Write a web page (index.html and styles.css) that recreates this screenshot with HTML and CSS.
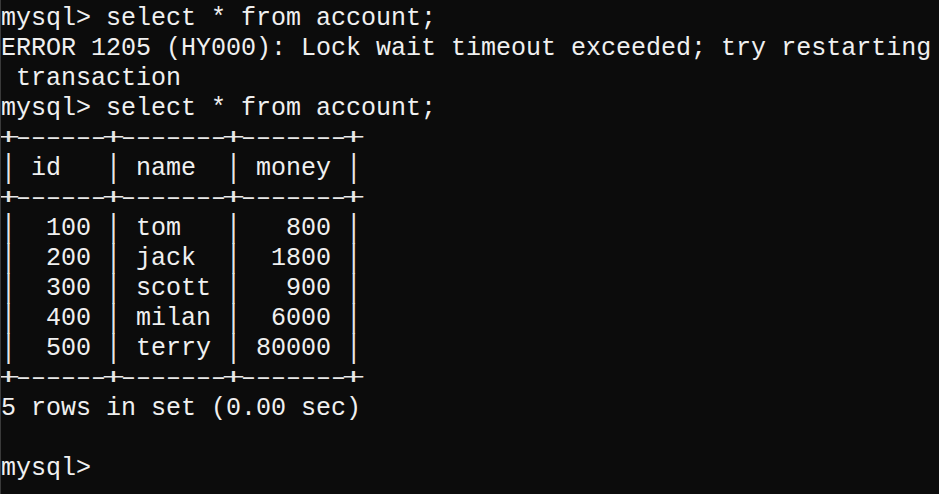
FILE: index.html
```html
<!DOCTYPE html>
<html>
<head>
<meta charset="utf-8">
<link rel="stylesheet" href="styles.css">
</head>
<body>
<pre class="console">mysql&gt; select * from account;
ERROR 1205 (HY000): Lock wait timeout exceeded; try restarting
 transaction
mysql&gt; select * from account;
<span class="rule">+------+-------+-------+</span>
<span class="v">|</span> id   <span class="v">|</span> name  <span class="v">|</span> money <span class="v">|</span>
<span class="rule">+------+-------+-------+</span>
<span class="v">|</span>  100 <span class="v">|</span> tom   <span class="v">|</span>   800 <span class="v">|</span>
<span class="v">|</span>  200 <span class="v">|</span> jack  <span class="v">|</span>  1800 <span class="v">|</span>
<span class="v">|</span>  300 <span class="v">|</span> scott <span class="v">|</span>   900 <span class="v">|</span>
<span class="v">|</span>  400 <span class="v">|</span> milan <span class="v">|</span>  6000 <span class="v">|</span>
<span class="v">|</span>  500 <span class="v">|</span> terry <span class="v">|</span> 80000 <span class="v">|</span>
<span class="rule">+------+-------+-------+</span>
5 rows in set (0.00 sec)

mysql&gt;</pre>
</body>
</html>
```
FILE: styles.css
```css
html, body {
  margin: 0;
  padding: 0;
  background: #0c0c0c;
  height: 100%;
  overflow: hidden;
}
body {
  border-left: 1px solid #3a3a3a;
  box-sizing: border-box;
}
.console {
  margin: 0;
  padding: 4px 0 0 0;
  font-family: "Liberation Mono", "DejaVu Sans Mono", monospace;
  font-size: 25px;
  line-height: 30px;
  color: #f0f0f0;
  white-space: pre;
}
.v {
  display: inline-block;
  transform: scaleY(1.32);
  color: #e8e8e8;
}
.rule {
  display: inline-block;
  vertical-align: top;
  line-height: 30px;
  font-size: 40px;
  letter-spacing: -9px;
  color: #e8e8e8;
  position: relative;
  top: -1px;
  left: -4.5px;
  transform: scaleY(0.55);
}
```
